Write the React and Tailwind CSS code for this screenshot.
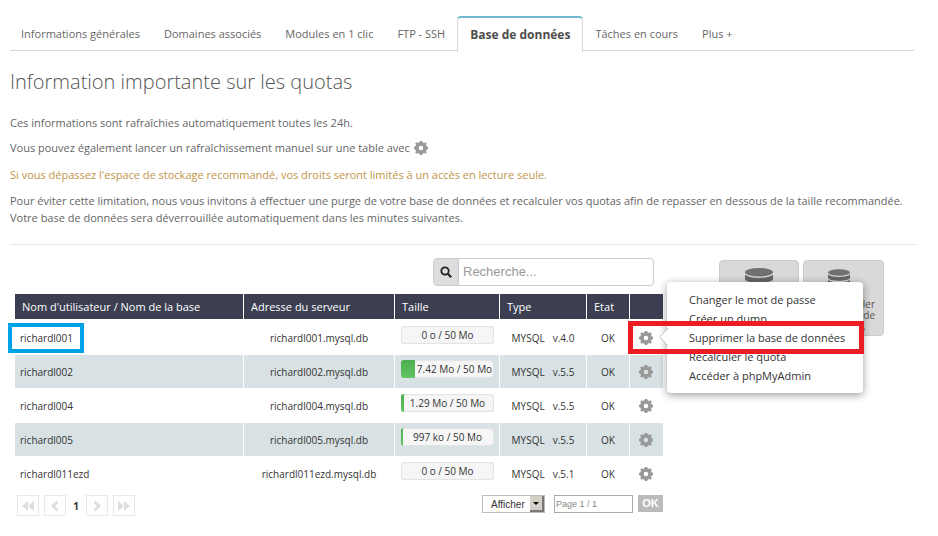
import React from "react";

const tabs = [
  { label: "Informations générales" },
  { label: "Domaines associés" },
  { label: "Modules en 1 clic" },
  { label: "FTP - SSH" },
  { label: "Base de données", active: true },
  { label: "Tâches en cours" },
  { label: "Plus +" },
];

const rows = [
  { name: "richardl001", size: "0 o / 50 Mo", used: 0, version: "v.4.0" },
  { name: "richardl002", size: "7.42 Mo / 50 Mo", used: 15, version: "v.5.5" },
  { name: "richardl004", size: "1.29 Mo / 50 Mo", used: 3, version: "v.5.5" },
  { name: "richardl005", size: "997 ko / 50 Mo", used: 2, version: "v.5.5" },
  { name: "richardl011ezd", size: "0 o / 50 Mo", used: 0, version: "v.5.1" },
];

const menuItems = [
  "Changer le mot de passe",
  "Créer un dump",
  "Supprimer la base de données",
  "Recalculer le quota",
  "Accéder à phpMyAdmin",
];

function Gear() {
  return (
    <svg viewBox="0 0 14 14" className="size-3.5 fill-[#999]" aria-hidden="true">
      <path
        fillRule="evenodd"
        d="M5.800 0h2.400l.3 1.300 1.700.7L11.400 1.200l1.400 1.400-.8 1.200.7 1.700 1.300.3v2.400l-1.300.3-.7 1.700.8 1.200-1.400 1.400-1.200-.8-1.700.7-.3 1.300H5.800l-.3-1.300-1.700-.7-1.200.8-1.400-1.400.8-1.200-.7-1.700L0 8.200V5.800l1.300-.3.7-1.700-.8-1.200 1.400-1.400 1.200.8 1.700-.7zM7 4.700a2.300 2.300 0 1 0 0 4.600 2.300 2.300 0 0 0 0-4.600z"
      />
    </svg>
  );
}

function Database({ className }) {
  return (
    <svg viewBox="0 0 28 30" className={className} aria-hidden="true">
      <path
        fill="#666"
        d="M0 6.500c4 4.500 24 4.500 28 0v4.500c0 5-28 5-28 0zM0 13.500c4 4.500 24 4.500 28 0v4.500c0 5-28 5-28 0zM0 20.500c4 4.500 24 4.500 28 0v4.500c0 5-28 5-28 0z"
      />
      <ellipse cx="14" cy="4.200" rx="14" ry="4.200" fill="#707070" />
    </svg>
  );
}

function PagerButton({ label, path }) {
  return (
    <button
      type="button"
      aria-label={label}
      className="flex h-[21px] w-[22px] items-center justify-center border border-[#e8e8e8] bg-white"
    >
      <svg viewBox="0 0 12 12" className="size-3 fill-[#dedede]" aria-hidden="true">
        <path d={path} />
      </svg>
    </button>
  );
}

function ActionMenu() {
  return (
    <div className="absolute -top-[39px] left-[37px] z-10 h-[111px] w-[196px] rounded-sm bg-white pt-2 shadow-[0_2px_8px_rgba(0,0,0,0.4)]">
      <ul>
        {menuItems.map((item) => (
          <li key={item} className="h-[19px]">
            <button type="button" className="block w-full pl-[22px] text-left text-[11px] leading-[19px] text-[#333]">
              {item}
            </button>
          </li>
        ))}
      </ul>
      <svg viewBox="0 0 9 18" className="absolute top-[46px] -left-2 h-[18px] w-[9px]" aria-hidden="true">
        <path d="M9 0 1 9l8 9" fill="#fff" stroke="#aaa" strokeDasharray="2 1" />
      </svg>
    </div>
  );
}

export default function App() {
  return (
    <div className="bg-white px-2.5 pt-4 font-['Open_Sans',sans-serif] text-[#666]">
      <nav className="mr-3.5 flex h-[35px] items-stretch gap-6 border-b border-[#d9d9d9] pl-[11px]">
        {tabs.map((tab) =>
          tab.active ? (
            <a
              key={tab.label}
              href="#"
              className="-mx-3 h-9 rounded-t-sm border-x border-t-2 border-x-[#d9d9d9] border-t-[#74b8cf] bg-white px-3 pt-2 text-xs leading-[18px] font-bold text-[#4d4d4d]"
            >
              {tab.label}
            </a>
          ) : (
            <a key={tab.label} href="#" className="pt-[9px] text-[11px] leading-[18px]">
              {tab.label}
            </a>
          ),
        )}
      </nav>

      <h1 className="mt-[17px] text-xl leading-7 font-light text-[#555]">Information importante sur les quotas</h1>
      <div className="text-[11px] leading-[18px]">
        <p className="mt-[18px]">Ces informations sont rafraîchies automatiquement toutes les 24h.</p>
        <p className="mt-[7px] flex items-center gap-1">
          Vous pouvez également lancer un rafraîchissement manuel sur une table avec <Gear />
        </p>
        <p className="mt-[9px] text-[#bf954b]">
          Si vous dépassez l'espace de stockage recommandé, vos droits seront limités à un accès en lecture seule.
        </p>
        <p className="mt-2 leading-[17px]">
          Pour éviter cette limitation, nous vous invitons à effectuer une purge de votre base de données et recalculer
          vos quotas afin de repasser en dessous de la taille recommandée.
          <br />
          Votre base de données sera déverrouillée automatiquement dans les minutes suivantes.
        </p>
      </div>
      <hr className="mt-[18px] mr-[11px] border-[#e8e8e8]" />

      <main className="flex items-start gap-14 pt-[13px] pl-[5px]">
        <section className="w-[648px] shrink-0">
          <label className="mr-[9px] ml-auto flex h-7 w-[221px] overflow-hidden rounded border border-[#ccc]">
            <span className="flex w-[25px] shrink-0 items-center justify-center border-r border-[#ccc] bg-[#ddd]">
              <svg viewBox="0 0 12 12" className="size-3" fill="none" stroke="#222" aria-hidden="true">
                <circle cx="5" cy="5" r="3.700" strokeWidth="1.800" />
                <path d="m7.800 7.800 3.400 3.400" strokeWidth="2.200" />
              </svg>
            </span>
            <input
              type="text"
              aria-label="Recherche"
              placeholder="Recherche..."
              className="min-w-0 flex-1 px-1 font-['Liberation_Sans',sans-serif] text-[13px] placeholder:text-[#999] outline-none"
            />
          </label>

          <table className="mt-2 w-full table-fixed border-separate border-spacing-0 text-[10px] leading-4 text-[#333]">
            <colgroup>
              <col />
              <col className="w-[151px]" />
              <col className="w-[105px]" />
              <col className="w-[87px]" />
              <col className="w-[43px]" />
              <col className="w-[33px]" />
            </colgroup>
            <thead>
              <tr className="h-[27px] text-left text-[11px] text-white *:border-r *:border-b-2 *:border-white *:bg-[#3b3f51] *:px-[7px] *:py-0 *:font-normal *:last:border-r-0">
                <th>Nom d'utilisateur / Nom de la base</th>
                <th>Adresse du serveur</th>
                <th>Taille</th>
                <th>Type</th>
                <th>Etat</th>
                <th aria-label="Actions"></th>
              </tr>
            </thead>
            <tbody>
              {rows.map((row, i) => (
                <tr
                  key={row.name}
                  className="h-[34px] even:bg-[#d8e1e3] *:border-r *:border-b *:border-white *:p-0 *:last:border-r-0"
                >
                  <td>
                    <div className="relative pl-[5px]">
                      {row.name}
                      {i === 0 && (
                        <span className="absolute -top-[7px] -left-[7px] h-[30px] w-[76px] border-4 border-[#00a2e8]" />
                      )}
                    </div>
                  </td>
                  <td className="text-center">{row.name}.mysql.db</td>
                  <td>
                    <div className="relative mb-1.5 ml-1.5 h-[18px] w-[93px] overflow-hidden rounded-[3px] bg-[#f6f6f6] text-center leading-[18px] whitespace-nowrap shadow-[inset_0_0_2px_rgba(0,0,0,0.25)]">
                      <div
                        className="absolute inset-y-0 left-0 bg-linear-to-b from-[#4cae4c] to-[#62c462]"
                        style={{ width: `${row.used}%` }}
                      />
                      <span className={row.used > 10 ? "relative pl-3.5" : "relative"}>{row.size}</span>
                    </div>
                  </td>
                  <td className="text-center">
                    <span className="inline-flex gap-2">
                      <span>MYSQL</span>
                      <span>{row.version}</span>
                    </span>
                  </td>
                  <td className="text-center">OK</td>
                  <td>
                    <div className="relative flex justify-center pr-0.5">
                      <button type="button" aria-label={`Actions ${row.name}`}>
                        <Gear />
                      </button>
                      {i === 0 && (
                        <div className="absolute -top-[10px] left-0">
                          <div className="relative">
                            <ActionMenu />
                            <div className="pointer-events-none absolute top-0 -left-0.5 z-20 h-[33px] w-[236px] border-[5px] border-[#ed1c24]" />
                          </div>
                        </div>
                      )}
                    </div>
                  </td>
                </tr>
              ))}
            </tbody>
          </table>

          <div className="mt-1 flex items-start">
            <div className="ml-0.5 flex items-center gap-[5px]">
              <PagerButton label="Première page" path="M6 1v10L0 6zM12 1v10L6 6z" />
              <PagerButton label="Page précédente" path="M7.500.500 9.500 2.500 6 6l3.500 3.500-2 2L2 6z" />
              <span className="w-2.5 text-center text-[10px] leading-4 font-bold text-[#333]">1</span>
              <PagerButton label="Page suivante" path="M4.500.500 2.500 2.500 6 6 2.500 9.500l2 2L10 6z" />
              <PagerButton label="Dernière page" path="M0 1v10l6-5zM6 1v10l6-5z" />
            </div>
            <div className="ml-auto flex items-start font-['Liberation_Sans',sans-serif]">
              <div className="relative mr-[9px] h-[18px] w-[63px]">
                <select
                  aria-label="Afficher"
                  className="block h-full w-full appearance-none border border-[#bbb] bg-white pl-2 text-[10px] text-[#333]"
                >
                  <option>Afficher</option>
                </select>
                <span className="pointer-events-none absolute inset-y-px right-px flex w-3.5 items-center justify-center border-r-2 border-b-2 border-[#777] bg-[#d4d0c8]">
                  <svg viewBox="0 0 6 3" className="h-[3px] w-1.5" aria-hidden="true">
                    <path d="M0 0h6L3 3z" />
                  </svg>
                </span>
              </div>
              <input
                type="text"
                aria-label="Page"
                placeholder="Page 1 / 1"
                className="mr-[5px] h-[18px] w-[79px] border border-[#aaa] px-px text-[9px] placeholder:text-[#888]"
              />
              <button type="button" className="h-[17px] w-[25px] bg-[#bbb] text-[11px] leading-[17px] font-bold text-white">
                OK
              </button>
            </div>
          </div>
        </section>

        <aside className="mt-0.5 flex shrink-0 gap-1">
          <button type="button" aria-label="Créer une base" className="flex h-[76px] w-20 justify-center rounded-sm border border-[#ccc] bg-[#d9d9d9] pt-[7px]">
            <Database className="h-[30px] w-7" />
          </button>
          <button type="button" className="relative h-[76px] w-[81px] rounded-sm border border-[#ccc] bg-[#d9d9d9] text-[10px] leading-[11px] text-[#555]">
            <Database className="absolute top-2 left-6 h-6 w-[22px]" />
            <span className="absolute top-[38px] right-2 text-right">
              ler
              <br />
              de
            </span>
            <span className="absolute top-[61px] right-[18px]">s</span>
          </button>
        </aside>
      </main>
    </div>
  );
}
